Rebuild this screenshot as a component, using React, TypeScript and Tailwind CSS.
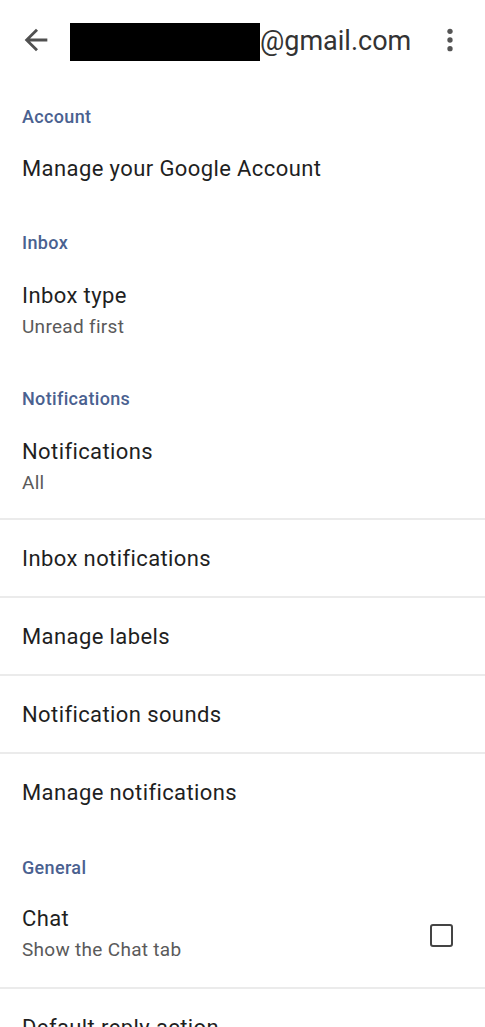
import { Fragment } from "react";

type Item = { title: string; subtitle?: string; checkbox?: boolean };

const FONT = { fontFamily: "Roboto, 'Noto Sans', sans-serif" };

function BackArrow() {
  return (
    <svg className="h-[34px] w-[34px] text-[#505050]" viewBox="0 0 24 24" fill="currentColor">
      <path d="M20 11H7.83l5.59-5.59L12 4l-8 8 8 8 1.41-1.41L7.83 13H20v-2z" />
    </svg>
  );
}

function MoreVert() {
  return (
    <svg className="h-[32px] w-[32px] text-[#555]" viewBox="0 0 24 24" fill="currentColor">
      <circle cx="12" cy="5.5" r="2" />
      <circle cx="12" cy="12" r="2" />
      <circle cx="12" cy="18.5" r="2" />
    </svg>
  );
}

function Label({ text, className = "pt-[23px] pb-[26px]" }: { text: string; className?: string }) {
  return (
    <div
      className={`px-[22px] text-[18px] leading-[24px] font-medium tracking-[0.35px] text-[#4a6190] ${className}`}
    >
      {text}
    </div>
  );
}

function TwoLine({ item, className }: { item: Item; className: string }) {
  return (
    <div className={`flex items-center pl-[22px] pr-[32px] ${className}`}>
      <div className="flex-1">
        <div className="text-[22px] leading-[30px] tracking-[0.4px] text-[#1f1f1f]">{item.title}</div>
        <div className="text-[19px] leading-[32px] tracking-[0.3px] text-[#5a5a5a]">{item.subtitle}</div>
      </div>
      {item.checkbox && (
        <div className="h-[23px] w-[23px] rounded-[3px] border-[2.5px] border-[#444]" />
      )}
    </div>
  );
}

function Row({ title }: { title: string }) {
  return (
    <div className="flex h-[78px] items-center border-t-2 border-[#ebebeb] px-[22px] text-[22px] tracking-[0.4px] text-[#1f1f1f]">
      {title}
    </div>
  );
}

const NOTIFICATION_ROWS = ["Inbox notifications", "Manage labels", "Notification sounds", "Manage notifications"];

export default function App() {
  return (
    <div className="h-[1027px] w-[485px] overflow-hidden bg-white" style={FONT}>
      {/* Header */}
      <header className="flex h-[80px] items-center pl-[19px] pr-[19px]">
        <BackArrow />
        <div className="ml-[17px] mt-[4px] h-[38px] w-[190px] bg-black" />
        <span className="mt-[2px] text-[27px] leading-none text-[#333]">@gmail.com</span>
        <div className="flex-1" />
        <MoreVert />
      </header>

      <Label text="Account" className="pt-[25px] pb-[26px]" />
      <div className="px-[22px] pb-[25px] text-[22px] leading-[28px] tracking-[0.4px] text-[#1f1f1f]">
        Manage your Google Account
      </div>

      <Label text="Inbox" />
      <TwoLine item={{ title: "Inbox type", subtitle: "Unread first" }} className="pb-[21px]" />

      <Label text="Notifications" />
      <TwoLine item={{ title: "Notifications", subtitle: "All" }} className="pb-[19px]" />

      {NOTIFICATION_ROWS.map((t) => (
        <Fragment key={t}>
          <Row title={t} />
        </Fragment>
      ))}

      <Label text="General" className="pt-[26px] pb-[24px]" />
      <TwoLine item={{ title: "Chat", subtitle: "Show the Chat tab", checkbox: true }} className="pb-[21px]" />

      <Row title="Default reply action" />
    </div>
  );
}
